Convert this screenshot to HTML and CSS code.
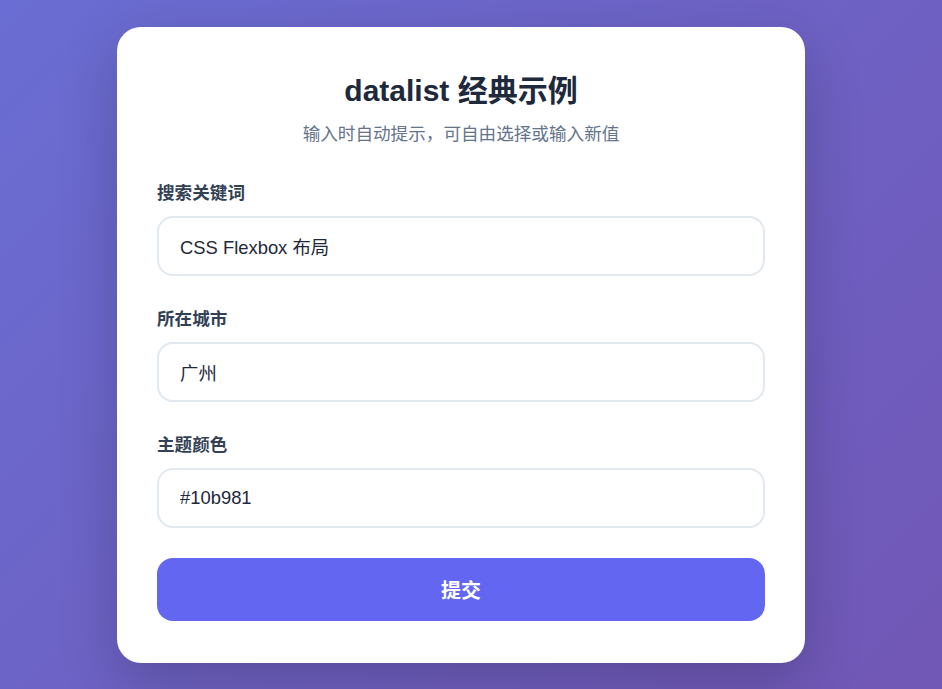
FILE: index.html
```html
<!DOCTYPE html>
<html lang="zh-CN">
<head>
<meta charset="utf-8">
<title>datalist 经典示例</title>
<link rel="stylesheet" href="styles.css">
</head>
<body>
<main class="card">
  <header class="head">
    <h1 class="title">datalist 经典示例</h1>
    <p class="subtitle">输入时自动提示，可自由选择或输入新值</p>
  </header>
  <form class="form">
    <div class="field">
      <label class="label" for="kw">搜索关键词</label>
      <input class="input" id="kw" list="kw-list" value="CSS Flexbox 布局">
      <datalist id="kw-list"><option value="CSS Flexbox 布局"></option><option value="CSS Grid 布局"></option></datalist>
    </div>
    <div class="field">
      <label class="label" for="city">所在城市</label>
      <input class="input" id="city" list="city-list" value="广州">
      <datalist id="city-list"><option value="北京"></option><option value="上海"></option><option value="广州"></option></datalist>
    </div>
    <div class="field">
      <label class="label" for="color">主题颜色</label>
      <input class="input" id="color" list="color-list" value="#10b981">
      <datalist id="color-list"><option value="#10b981"></option><option value="#6366f1"></option></datalist>
    </div>
    <button class="submit" type="button">提交</button>
  </form>
</main>
</body>
</html>
```

FILE: styles.css
```css
* { box-sizing: border-box; }
html, body { height: 100%; }
body {
  margin: 0;
  padding-right: 20px;
  min-height: 100vh;
  display: flex;
  align-items: center;
  justify-content: center;
  background: linear-gradient(135deg, #6a6dd3 0%, #7157b6 100%);
  font-family: "Liberation Sans", "Noto Sans CJK SC", sans-serif;
}
.card {
  width: 688px;
  background: #ffffff;
  border-radius: 24px;
  padding: 40px 40px 42px;
  box-shadow: 0 20px 60px rgba(0, 0, 0, 0.2);
}
.head { text-align: center; margin-bottom: 33px; }
.title {
  margin: 0 0 6px;
  font-size: 30px;
  line-height: 48px;
  font-weight: 700;
  color: #1e293b;
}
.subtitle {
  margin: 0;
  font-size: 17.6px;
  line-height: 26px;
  color: #64748b;
}
.form { display: flex; flex-direction: column; }
.field { display: flex; flex-direction: column; margin-bottom: 30px; }
.label {
  font-size: 17.6px;
  line-height: 26px;
  font-weight: 700;
  color: #334155;
  margin-bottom: 10px;
}
.input {
  height: 60px;
  padding: 16px 21px;
  border: 2px solid #e2e8f0;
  border-radius: 16px;
  font-family: inherit;
  font-size: 18.4px;
  line-height: 24px;
  color: #1e293b;
  background: #fff;
  outline: none;
}
.submit {
  height: 63px;
  border: none;
  border-radius: 16px;
  background: #6366f1;
  color: #fff;
  font-family: inherit;
  font-size: 20px;
  font-weight: 700;
  cursor: pointer;
}
```
